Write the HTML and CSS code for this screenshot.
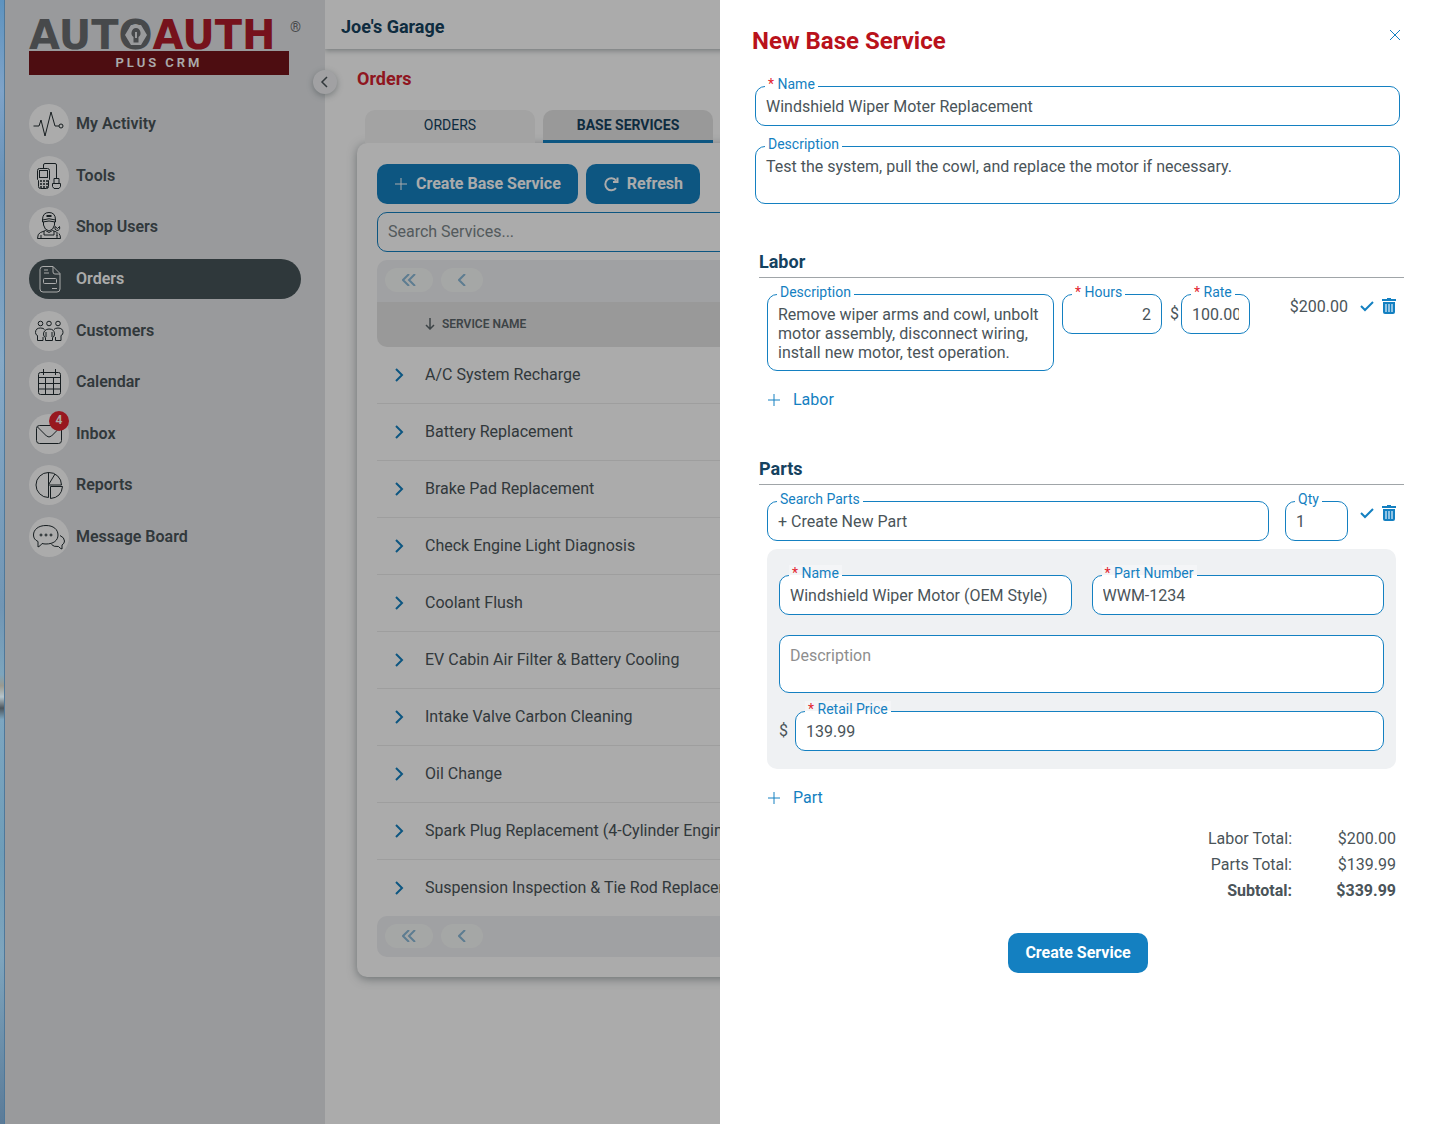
FILE: index.html
```html
<!DOCTYPE html>
<html lang="en">
<head>
    <meta charset="UTF-8">
    <meta name="viewport" content="width=device-width, initial-scale=1.0">
    <title>Orders - Base Services</title>
    <link rel="stylesheet" href="styles.css">
</head>
<body>
    <div class="desktop-edge"></div>
    <div class="app">
        <aside class="sidebar">
            <div class="logo">
                <div class="logo-name"><span>AUT<span class="logo-o">O<svg viewBox="0 0 22 20" width="22" height="20"><path d="M6 0h10l6 10-6 10H6L0 10z" fill="#e4e6e9"/><path d="M11 3a5 5 0 0 0-2.500 9V17.500h5V12A5 5 0 0 0 11 3z" fill="#6b6d70"/><path d="M10 7h2v6h-2z" fill="#e4e6e9"/></svg></span></span><span class="logo-red">AUTH</span><sup>®</sup></div>
                <div class="logo-bar">PLUS CRM</div>
            </div>
            <nav class="nav">
                <a href="#" class="nav-item">
                    <span class="nav-icon"><svg viewBox="0 0 40 40"><path d="M4.500 22H10l2-6 4 16 6-24 4 14h4"/><circle cx="32" cy="22" r="2"/></svg></span>
                    My Activity
                </a>
                <a href="#" class="nav-item">
                    <span class="nav-icon"><svg viewBox="0 0 40 40"><path d="M10.500 12.500h8q2 0 2 2v9l-1 1v6q0 2-2 2h-6q-2 0-2-2v-6l-1-1v-9q0-2 2-2z"/><rect x="10.500" y="14.500" width="8" height="7"/><path d="M14.500 12V9q0-1.500 1.500-1.500h10q1.500 0 1.500 1.500v13.500M25 22.500h5v5h-5zM23.500 27.500h8v3l-1.500 2h-5l-1.500-2z"/><path d="M11 25h2m1 0h2m1 0h2M11 28h2m1 0h2m1 0h2M11 31h2m1 0h2m1 0h2" stroke-width="1.500"/></svg></span>
                    Tools
                </a>
                <a href="#" class="nav-item">
                    <span class="nav-icon"><svg viewBox="0 0 40 40"><path d="M13.500 13q0-7.500 6.500-7.500t6.500 7.500M13.500 13q6.500-2.500 13 0v2q-6.500-2-13 0zM14.500 15v3q1 5 5.500 6 4.500-1 5.500-6v-3M8.500 31.500q0-5 3-6l5-2 3.500 2 3.500-2 4 1.500M8.500 31.500h23q0-3-1.500-5M15 24v4h10v-4M12 28v3M28 28v3M28 25v4"/><path d="M26 19.500q-1 3.500 2 4 3.500-.5 2.500-4l-2 2z"/><path d="M17.500 9h5" stroke-width="2"/></svg></span>
                    Shop Users
                </a>
                <a href="#" class="nav-item active">
                    <span class="nav-icon"><svg viewBox="0 0 40 40"><path d="M14 7.500h10l7 7V30q0 3-3 3H14q-3 0-3-3V10.500q0-3 3-3zM24 7.500V13q0 2 2 2h5M15 11h4M15 14h5M23 29.500h5"/><rect x="14.500" y="19.500" width="13" height="5" rx="1"/></svg></span>
                    Orders
                </a>
                <a href="#" class="nav-item">
                    <span class="nav-icon"><svg viewBox="0 0 40 40"><circle cx="11.500" cy="12.500" r="2.300"/><circle cx="20" cy="12.500" r="2.300"/><circle cx="29" cy="12.500" r="2.300"/><path d="M16 19.500q1.500-1.500 4-1.500 5.500 0 5.500 5 0 3-2 3.500v3h-7v-3q-2-.5-2-3.500 0-2 1.500-3.500zM8.500 29.500v-5q-2-.5-2-3 0-4.500 5-4.500 3 0 4 1.500M8.500 29.500H14V26M32 29.500v-5q2-.5 2-3 0-4.500-5-4.500-3 0-4 1.500M32 29.500h-5.500V26M17 21v5M23 21v5"/></svg></span>
                    Customers
                </a>
                <a href="#" class="nav-item">
                    <span class="nav-icon"><svg viewBox="0 0 40 40"><rect x="9.500" y="10.500" width="22" height="22" rx="2"/><path d="M9.500 15.500h22M9.500 21.500h22M9.500 27h22M16.500 15.500v17M24.500 15.500v17M14.500 7v6M26.500 7v6"/></svg></span>
                    Calendar
                </a>
                <a href="#" class="nav-item">
                    <span class="nav-icon"><svg viewBox="0 0 40 40"><rect x="7.500" y="11.500" width="25" height="18" rx="3"/><path d="M8.500 13l9 9q2.500 2 5 0l9-9"/></svg><span class="badge">4</span></span>
                    Inbox
                </a>
                <a href="#" class="nav-item">
                    <span class="nav-icon"><svg viewBox="0 0 40 40"><path d="M19.500 7.500a12.500 12.500 0 0 0 0 25zM19.500 7.500a12.500 12.500 0 0 1 13 12.500h-13zM21.500 21.500h12q-1 11-12 12zM20 19l6-10"/></svg></span>
                    Reports
                </a>
                <a href="#" class="nav-item">
                    <span class="nav-icon"><svg viewBox="0 0 40 40"><path d="M17 8.500c7.500 0 12 4 12 9.500s-4.500 9-12 9q-2 0-4-.5-1.500 2.500-4 3.500V24.500q-4.500-2-4.500-6.500c0-5.500 5-9.500 12.500-9.500z"/><path d="M31 18.500q4.500 2 4.500 5.500 0 2.500-2.500 4v4q-2-.5-3.500-2.500-5 .5-7-2"/><circle cx="12" cy="18" r="1"/><circle cx="17" cy="18" r="1"/><circle cx="22" cy="18" r="1"/></svg></span>
                    Message Board
                </a>
            </nav>
            <button type="button" class="collapse-btn" aria-label="Collapse menu"><svg viewBox="0 0 12 12" width="12" height="12"><path d="M8 1L3 6l5 5"/></svg></button>
        </aside>

        <main class="main">
            <header class="topbar">Joe's Garage</header>
            <div class="content">
                <h1>Orders</h1>
                <div class="tabs">
                    <button type="button" class="tab">ORDERS</button>
                    <button type="button" class="tab active">BASE SERVICES</button>
                </div>
                <section class="panel">
                    <div class="toolbar">
                        <button type="button" class="btn"><svg viewBox="0 0 14 14" width="14" height="14"><path d="M7 1v12M1 7h12"/></svg>Create Base Service</button>
                        <button type="button" class="btn"><svg class="bold" viewBox="0 0 16 16" width="16" height="16"><path d="M13 4.500A6 6 0 1 0 13 12M14.500 1.500V6H10"/></svg>Refresh</button>
                    </div>
                    <input type="text" class="search" placeholder="Search Services..." aria-label="Search Services">
                    <div class="pager">
                        <button type="button" class="page-btn first" aria-label="First page"><svg viewBox="0 0 14 12" width="14" height="12"><path d="M7 0L1 6l6 6M13 0L7 6l6 6"/></svg></button>
                        <button type="button" class="page-btn" aria-label="Previous page"><svg viewBox="0 0 8 12" width="8" height="12"><path d="M7 0L1 6l6 6"/></svg></button>
                    </div>
                    <table class="services">
                        <thead>
                            <tr><th class="expand"></th><th><svg viewBox="0 0 10 12" width="10" height="12"><path d="M5 0v11M1 7l4 4 4-4"/></svg>SERVICE NAME</th></tr>
                        </thead>
                        <tbody>
                            <tr><td class="expand"><svg viewBox="0 0 10 14" width="10" height="14"><path d="M2 1l6 6-6 6"/></svg></td><td>A/C System Recharge</td></tr>
                            <tr><td class="expand"><svg viewBox="0 0 10 14" width="10" height="14"><path d="M2 1l6 6-6 6"/></svg></td><td>Battery Replacement</td></tr>
                            <tr><td class="expand"><svg viewBox="0 0 10 14" width="10" height="14"><path d="M2 1l6 6-6 6"/></svg></td><td>Brake Pad Replacement</td></tr>
                            <tr><td class="expand"><svg viewBox="0 0 10 14" width="10" height="14"><path d="M2 1l6 6-6 6"/></svg></td><td>Check Engine Light Diagnosis</td></tr>
                            <tr><td class="expand"><svg viewBox="0 0 10 14" width="10" height="14"><path d="M2 1l6 6-6 6"/></svg></td><td>Coolant Flush</td></tr>
                            <tr><td class="expand"><svg viewBox="0 0 10 14" width="10" height="14"><path d="M2 1l6 6-6 6"/></svg></td><td>EV Cabin Air Filter &amp; Battery Cooling</td></tr>
                            <tr><td class="expand"><svg viewBox="0 0 10 14" width="10" height="14"><path d="M2 1l6 6-6 6"/></svg></td><td>Intake Valve Carbon Cleaning</td></tr>
                            <tr><td class="expand"><svg viewBox="0 0 10 14" width="10" height="14"><path d="M2 1l6 6-6 6"/></svg></td><td>Oil Change</td></tr>
                            <tr><td class="expand"><svg viewBox="0 0 10 14" width="10" height="14"><path d="M2 1l6 6-6 6"/></svg></td><td>Spark Plug Replacement (4-Cylinder Engine)</td></tr>
                            <tr><td class="expand"><svg viewBox="0 0 10 14" width="10" height="14"><path d="M2 1l6 6-6 6"/></svg></td><td>Suspension Inspection &amp; Tie Rod Replacement</td></tr>
                        </tbody>
                    </table>
                    <div class="pager bottom">
                        <button type="button" class="page-btn first" aria-label="First page"><svg viewBox="0 0 14 12" width="14" height="12"><path d="M7 0L1 6l6 6M13 0L7 6l6 6"/></svg></button>
                        <button type="button" class="page-btn" aria-label="Previous page"><svg viewBox="0 0 8 12" width="8" height="12"><path d="M7 0L1 6l6 6"/></svg></button>
                    </div>
                </section>
            </div>
        </main>
    </div>

    <div class="overlay"></div>

    <form class="drawer">
        <div class="drawer-head">
            <h2>New Base Service</h2>
            <button type="button" class="icon-btn" aria-label="Close"><svg viewBox="0 0 12 12" width="12" height="12"><path class="thin" d="M1 1l10 10M11 1L1 11"/></svg></button>
        </div>

        <div class="service-fields">
            <div class="field">
                <label for="name"><span class="req">*</span> Name</label>
                <input type="text" id="name" value="Windshield Wiper Moter Replacement">
            </div>
            <div class="field">
                <label for="description">Description</label>
                <textarea id="description" rows="2">Test the system, pull the cowl, and replace the motor if necessary.</textarea>
            </div>
        </div>

        <section class="section labor">
            <h3>Labor</h3>
            <div class="labor-row">
                <div class="field grow">
                    <label for="labor-desc">Description</label>
                    <textarea id="labor-desc" rows="3">Remove wiper arms and cowl, unbolt motor assembly, disconnect wiring, install new motor, test operation.</textarea>
                </div>
                <div class="field hours">
                    <label for="hours"><span class="req">*</span> Hours</label>
                    <input type="text" id="hours" inputmode="decimal" value="2">
                </div>
                <div class="money">
                    <span>$</span>
                    <div class="field rate">
                        <label for="rate"><span class="req">*</span> Rate</label>
                        <input type="text" id="rate" inputmode="decimal" value="100.00">
                    </div>
                </div>
                <div class="line-total">$200.00</div>
                <div class="row-actions">
                    <button type="button" class="icon-btn" aria-label="Save labor"><svg viewBox="0 0 14 12" width="14" height="12"><path d="M1 6l4 4 8-8"/></svg></button>
                    <button type="button" class="icon-btn" aria-label="Delete labor"><svg class="trash" viewBox="0 0 14 16" width="14" height="16"><path d="M5 0h4v1h5v2H0V1h5z"/><path d="M1 4h12v10q0 2-2 2H3q-2 0-2-2z"/><path class="slots" d="M3 6h2v8H3zM6 6h2v8H6zM9 6h2v8H9z"/></svg></button>
                </div>
            </div>
            <button type="button" class="add-btn"><svg viewBox="0 0 14 14" width="14" height="14"><path d="M7 1v12M1 7h12"/></svg>Labor</button>
        </section>

        <section class="section parts">
            <h3>Parts</h3>
            <div class="part-row">
                <div class="field grow">
                    <label for="search-parts">Search Parts</label>
                    <input type="text" id="search-parts" value="+ Create New Part">
                </div>
                <div class="field qty">
                    <label for="qty">Qty</label>
                    <input type="text" id="qty" inputmode="numeric" value="1">
                </div>
                <div class="row-actions">
                    <button type="button" class="icon-btn" aria-label="Save part"><svg viewBox="0 0 14 12" width="14" height="12"><path d="M1 6l4 4 8-8"/></svg></button>
                    <button type="button" class="icon-btn" aria-label="Delete part"><svg class="trash" viewBox="0 0 14 16" width="14" height="16"><path d="M5 0h4v1h5v2H0V1h5z"/><path d="M1 4h12v10q0 2-2 2H3q-2 0-2-2z"/><path class="slots" d="M3 6h2v8H3zM6 6h2v8H6zM9 6h2v8H9z"/></svg></button>
                </div>
            </div>
            <div class="new-part">
                <div class="two-col">
                    <div class="field">
                        <label for="part-name"><span class="req">*</span> Name</label>
                        <input type="text" id="part-name" value="Windshield Wiper Motor (OEM Style)">
                    </div>
                    <div class="field">
                        <label for="part-number"><span class="req">*</span> Part Number</label>
                        <input type="text" id="part-number" value="WWM-1234">
                    </div>
                </div>
                <div class="field">
                    <textarea rows="2" placeholder="Description" aria-label="Description"></textarea>
                </div>
                <div class="money price">
                    <span>$</span>
                    <div class="field grow">
                        <label for="price"><span class="req">*</span> Retail Price</label>
                        <input type="text" id="price" inputmode="decimal" value="139.99">
                    </div>
                </div>
            </div>
            <button type="button" class="add-btn"><svg viewBox="0 0 14 14" width="14" height="14"><path d="M7 1v12M1 7h12"/></svg>Part</button>
        </section>

        <dl class="totals">
            <dt>Labor Total:</dt><dd>$200.00</dd>
            <dt>Parts Total:</dt><dd>$139.99</dd>
            <dt class="sum">Subtotal:</dt><dd class="sum">$339.99</dd>
        </dl>

        <button type="submit" class="btn submit">Create Service</button>
    </form>
</body>
</html>
```

FILE: styles.css
```css
* {
    box-sizing: border-box;
}
body {
    margin: 0;
    display: flex;
    min-height: 100vh;
    font-family: Roboto, "Liberation Sans", sans-serif;
    font-size: 16px;
    line-height: 20px;
    color: #4a5459;
    background: #fff;
}
h1, h2, h3, dl, dd {
    margin: 0;
}
button, input, textarea {
    font: inherit;
    color: inherit;
}
button {
    border: none;
    padding: 0;
    background: none;
    cursor: pointer;
}
svg {
    display: block;
    flex-shrink: 0;
    fill: none;
    stroke: currentColor;
    stroke-width: 2;
}

/* strip of wallpaper beside the window */
.desktop-edge {
    width: 5px;
    flex-shrink: 0;
    border-right: 1px solid #4f789a;
    background: linear-gradient(#5e93bf 0%, #7fa3c8 8%, #6b93b8 16%, #86a9c6 32%, #7296b4 54%, #7da5bd 60%, #9a9a90 61%, #b5c5cc 62%, #4c555c 63%, #7da6c0 64%, #6f9db8 76%, #7fa5bd 85%, #5b7b98 100%);
}
.app {
    flex: 1;
    display: flex;
    min-width: 0;
}

/* sidebar */
.sidebar {
    position: relative;
    width: 320px;
    flex-shrink: 0;
    padding: 20px 24px;
    background: #e4e6e9;
}
.logo {
    margin-bottom: 29px;
}
.logo-name {
    display: flex;
    height: 31px;
    font-family: "DejaVu Sans", sans-serif;
    font-size: 40px;
    font-weight: bold;
    line-height: 31px;
    color: #6b6d70;
}
.logo-o {
    position: relative;
}
.logo-o svg {
    position: absolute;
    left: 6px;
    top: 13px;
    stroke: none;
}
.logo-red {
    color: #b01c2b;
}
.logo-name sup {
    margin-left: auto;
    font-family: Roboto, sans-serif;
    font-size: 14px;
    font-weight: normal;
    line-height: 14px;
}
.logo-bar {
    width: 260px;
    height: 24px;
    background: #74141a;
    color: #fff;
    font-size: 13px;
    font-weight: 600;
    line-height: 24px;
    letter-spacing: 3px;
    text-align: center;
}
.nav {
    display: flex;
    flex-direction: column;
    justify-content: space-between;
    height: 453px;
}
.nav-item {
    display: flex;
    align-items: center;
    gap: 7px;
    border-radius: 20px;
    color: #4a5459;
    font-weight: 600;
    text-decoration: none;
}
.nav-item.active {
    background: #465458;
    color: #fff;
}
.nav-icon {
    position: relative;
    width: 40px;
    height: 40px;
    border-radius: 50%;
    background: #fff;
    color: #222c30;
}
.nav-icon svg {
    stroke-width: 1;
}
.nav-item.active .nav-icon {
    background: none;
    color: #fff;
}
.badge {
    position: absolute;
    top: -3px;
    right: 0;
    width: 20px;
    height: 20px;
    border-radius: 50%;
    background: #e3242f;
    color: #fff;
    font-size: 12px;
    line-height: 19px;
    text-align: center;
}
.collapse-btn {
    position: absolute;
    top: 70px;
    right: -12px;
    display: flex;
    align-items: center;
    justify-content: center;
    width: 24px;
    height: 24px;
    border-radius: 50%;
    background: #f0f1f4;
    box-shadow: 0 2px 6px rgba(70,84,88,0.4);
}
.collapse-btn svg {
    stroke-width: 1.5;
}

/* page */
.main {
    flex: 1;
    min-width: 0;
}
.topbar {
    height: 49px;
    padding: 17px 16px;
    color: #15425f;
    font-size: 18px;
    font-weight: bold;
    box-shadow: 0 2px 5px rgba(70,84,88,0.4);
}
.content {
    padding: 20px 32px;
}
h1 {
    color: #d6212f;
    font-size: 18px;
    line-height: 20px;
}
.tabs {
    display: flex;
    gap: 8px;
    padding: 21px 8px 0;
}
.tab {
    width: 170px;
    height: 33px;
    border-bottom: 3px solid transparent;
    border-radius: 10px 10px 0 0;
    background: #f3f3f3;
    color: #15425f;
    font-size: 14px;
}
.tab.active {
    background: linear-gradient(#1480c1, #1480c1) bottom / 100% 3px no-repeat border-box, #e4e4e4;
    font-weight: bold;
}
.panel {
    padding: 21px 20px 20px;
    border-radius: 10px;
    box-shadow: 0 2px 10px rgba(70,84,88,0.5);
}
.toolbar {
    display: flex;
    gap: 8px;
    margin-bottom: 8px;
}
.btn {
    display: flex;
    align-items: center;
    gap: 8px;
    height: 40px;
    padding: 0 17px;
    border-radius: 10px;
    background: #1480c1;
    color: #fff;
    font-weight: bold;
}
.btn svg {
    stroke-width: 1;
}
.btn svg.bold {
    stroke-width: 2;
}
.search {
    display: block;
    width: 100%;
    height: 40px;
    padding: 0 10px 2px;
    border: 1px solid #1480c1;
    border-radius: 10px;
    background: #fff;
}
.search::placeholder {
    color: #7c868a;
}
.pager {
    display: flex;
    gap: 8px;
    margin-top: 8px;
    padding: 8px 8px 10px;
    border-radius: 10px 10px 0 0;
    background: #eff0f3;
}
.pager.bottom {
    margin-top: 0;
    padding-bottom: 9px;
    border-radius: 10px;
}
.page-btn {
    display: flex;
    align-items: center;
    justify-content: center;
    width: 42px;
    height: 24px;
    border-radius: 12px;
    background: #f7f9f8;
    color: #8bb9d8;
}
.page-btn.first {
    width: 48px;
}
.services {
    width: 100%;
    border-collapse: separate;
    border-spacing: 0;
}
.services th {
    height: 45px;
    padding: 0 0 2px;
    background: #e4e4e4;
    color: #5c666a;
    font-size: 12px;
    font-weight: 600;
    text-align: left;
}
.services th:first-child {
    border-radius: 0 0 0 10px;
}
.services th:last-child {
    border-radius: 0 0 10px 0;
}
.services th svg {
    display: inline-block;
    margin-right: 7px;
    vertical-align: middle;
    stroke-width: 1.5;
}
.services td {
    height: 57px;
    padding: 0;
    border-bottom: 1px solid #ececec;
    white-space: nowrap;
}
.services tr:last-child td {
    height: 56px;
    border-bottom: none;
}
.services .expand {
    width: 48px;
    padding-left: 17px;
    color: #1480c1;
}

.overlay {
    position: fixed;
    inset: 0 0 0 5px;
    background: rgba(0,0,0,0.33);
}

/* new service drawer */
.drawer {
    position: absolute;
    top: 0;
    right: 0;
    left: 720px;
    min-height: 100%;
    padding: 26px 25px 26px 32px;
    background: #fff;
}
.drawer-head {
    display: flex;
    align-items: flex-start;
    justify-content: space-between;
    padding-right: 3px;
}
h2 {
    color: #b9121b;
    font-size: 24px;
    line-height: 30px;
}
.icon-btn {
    display: flex;
    align-items: center;
    height: 24px;
    color: #1480c1;
}
.drawer-head .icon-btn {
    height: 18px;
}
.thin {
    stroke-width: 1;
}
.service-fields {
    display: flex;
    flex-direction: column;
    gap: 20px;
    padding: 30px 4px 0 3px;
}
.field {
    position: relative;
}
.field.grow {
    flex: 1;
    min-width: 0;
}
.field label {
    position: absolute;
    top: -10px;
    left: 10px;
    padding: 0 3px;
    background: #fff;
    color: #1480c1;
    font-size: 14px;
    line-height: 16px;
    white-space: nowrap;
}
.req {
    color: #e3242f;
}
.field input, .field textarea {
    display: block;
    width: 100%;
    height: 40px;
    padding: 9px 10px;
    border: 1px solid #1480c1;
    border-radius: 10px;
    background: #fff;
    line-height: 19px;
}
.field textarea {
    height: auto;
    padding: 10px 10px 8px;
    resize: none;
    overflow: hidden;
}
.field textarea::placeholder {
    color: #8e8e8e;
}
.section {
    padding-left: 7px;
}
.section.labor {
    margin-top: 46px;
}
.section.parts {
    margin-top: 47px;
}
h3 {
    padding-bottom: 3px;
    border-bottom: 1px solid #a0a5a8;
    color: #15425f;
    font-size: 18px;
    line-height: 24px;
}
.labor-row, .part-row {
    display: flex;
    align-items: flex-start;
    gap: 8px;
    padding: 16px 8px 0;
}
.part-row {
    gap: 16px;
}
.field.hours {
    width: 100px;
}
.field.hours input {
    text-align: right;
}
.money {
    display: flex;
    align-items: center;
    gap: 2px;
}
.field.rate {
    width: 69px;
}
.field.qty {
    width: 63px;
}
.line-total {
    width: 90px;
    line-height: 26px;
    text-align: right;
}
.row-actions {
    display: flex;
    gap: 8px;
    margin-left: 4px;
}
.part-row .row-actions {
    margin-left: -4px;
}
.trash {
    fill: currentColor;
    stroke: none;
}
.trash .slots {
    fill: #8fc3e4;
}
.add-btn {
    display: flex;
    align-items: center;
    gap: 12px;
    height: 20px;
    margin: 19px 8px 0;
    color: #1480c1;
}
.add-btn svg {
    stroke-width: 1;
}
.new-part {
    margin: 8px 8px 0;
    padding: 26px 12px 18px;
    border-radius: 10px;
    background: #eff1f3;
}
.new-part label {
    background: linear-gradient(#f4f5f7 60%, #fff 60%);
}
.two-col {
    display: grid;
    grid-template-columns: 1fr 1fr;
    gap: 20px;
    margin-bottom: 20px;
}
.money.price {
    gap: 7px;
    margin-top: 18px;
}
.totals {
    display: grid;
    grid-template-columns: 1fr 104px;
    row-gap: 6px;
    padding: 21px 8px 0;
    text-align: right;
}
.totals .sum {
    font-weight: bold;
}
.btn.submit {
    margin: 32px auto 0;
}
```
